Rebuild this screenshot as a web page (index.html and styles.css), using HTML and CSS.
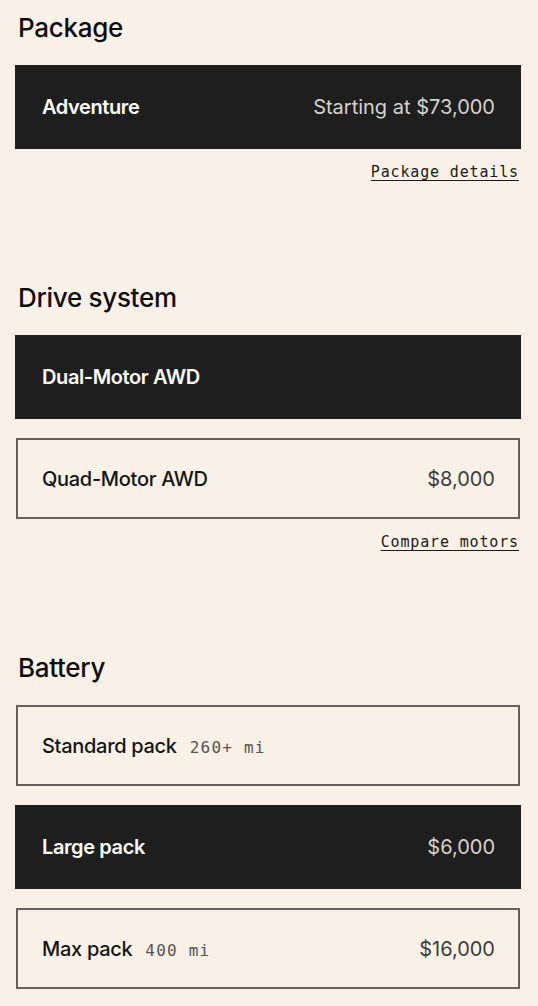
FILE: index.html
```html
<!DOCTYPE html>
<html lang="en">
<head>
    <meta charset="UTF-8">
    <meta name="viewport" content="width=device-width, initial-scale=1.0">
    <title>Configure</title>
    <link rel="stylesheet" href="styles.css">
</head>
<body>
    <section class="group">
        <h2 class="group-title">Package</h2>
        <div class="options">
            <div class="option selected">
                <span class="name">Adventure</span>
                <span class="price">Starting at $73,000</span>
            </div>
        </div>
        <div class="more"><a href="#">Package details</a></div>
    </section>

    <section class="group">
        <h2 class="group-title">Drive system</h2>
        <div class="options">
            <div class="option selected">
                <span class="name">Dual-Motor AWD</span>
            </div>
            <div class="option">
                <span class="name">Quad-Motor AWD</span>
                <span class="price">$8,000</span>
            </div>
        </div>
        <div class="more"><a href="#">Compare motors</a></div>
    </section>

    <section class="group">
        <h2 class="group-title">Battery</h2>
        <div class="options">
            <div class="option">
                <span class="name">Standard pack <span class="range">260+ mi</span></span>
            </div>
            <div class="option selected">
                <span class="name">Large pack</span>
                <span class="price">$6,000</span>
            </div>
            <div class="option">
                <span class="name">Max pack <span class="range">400 mi</span></span>
                <span class="price">$16,000</span>
            </div>
        </div>
    </section>
</body>
</html>
```

FILE: styles.css
```css
body {
    margin: 0;
    padding: 13px 17px 0 15px;
    background-color: #f9f1e8;
    font-family: Inter, "Noto Sans", sans-serif;
    color: #141414;
}

.group {
    margin-bottom: 101px;
}

.group:last-child {
    margin-bottom: 0;
}

.group-title {
    margin: 0 0 20px 3px;
    font-size: 26px;
    line-height: 30px;
    padding-bottom: 2px;
    font-weight: 500;
    letter-spacing: -0.3px;
    color: #0d0d0d;
}

.options {
    display: flex;
    flex-direction: column;
    gap: 19px;
}

.option {
    display: flex;
    justify-content: space-between;
    align-items: center;
    box-sizing: border-box;
    height: 81px;
    margin: 0 1px;
    padding: 0 23px 0 24px;
    border: 2px solid #67605a;
    font-size: 20px;
}

.option.selected {
    height: 84px;
    margin: 0;
    padding: 0 26px 0 27px;
    border: none;
    background-color: #1f1e1e;
    color: #ffffff;
}

.name {
    font-weight: 500;
    letter-spacing: -0.3px;
}

.selected .name {
    font-weight: 600;
    letter-spacing: -0.4px;
}

.price {
    font-size: 20px;
    letter-spacing: 0;
    color: #3f3b38;
}

.selected .price {
    color: #d6d2ce;
}

.range {
    margin-left: 8px;
    font-family: "DejaVu Sans Mono", monospace;
    font-size: 16px;
    font-weight: 400;
    letter-spacing: 1.2px;
    color: #57524d;
}

.more {
    margin-top: 12px;
    padding-right: 2px;
    text-align: right;
    line-height: 20px;
}

.more a {
    font-family: "DejaVu Sans Mono", monospace;
    font-size: 15px;
    font-weight: 300;
    letter-spacing: 0.85px;
    color: #1a1a1a;
    text-decoration: underline;
    text-underline-offset: 3px;
}
```
